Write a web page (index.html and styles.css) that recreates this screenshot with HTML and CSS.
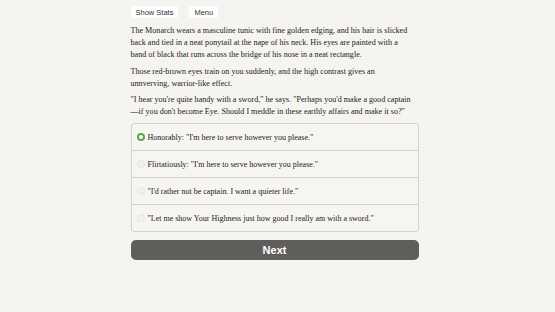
FILE: index.html
```html
<!DOCTYPE html>
<html lang="en">
<head>
  <meta charset="UTF-8" />
  <title>Choice of the Monarch</title>
  <link rel="stylesheet" href="styles.css">
</head>
<body>
  <div class="container">
    <div class="buttons">
      <button class="top-btn">Show Stats</button>
      <button class="top-btn">Menu</button>
    </div>

    <div class="text">
      <p>The Monarch wears a masculine tunic with fine golden edging, and his hair is slicked back and tied in a neat ponytail at the nape of his neck. His eyes are painted with a band of black that runs across the bridge of his nose in a neat rectangle.</p>
      <p>Those red-brown eyes train on you suddenly, and the high contrast gives an unnverving, warrior-like effect.</p>
      <p>"I hear you're quite handy with a sword," he says. "Perhaps you'd make a good captain—if you don't become Eye. Should I meddle in these earthly affairs and make it so?"</p>
    </div>

    <form class="choices">
      <label class="choice"><input type="radio" name="choice" checked> Honorably: "I'm here to serve however you please."</label>
      <label class="choice"><input type="radio" name="choice"> Flirtatiously: "I'm here to serve however you please."</label>
      <label class="choice"><input type="radio" name="choice"> "I'd rather not be captain. I want a quieter life."</label>
      <label class="choice"><input type="radio" name="choice"> "Let me show Your Highness just how good I really am with a sword."</label>
    </form>

    <button class="next">Next</button>
  </div>
</body>
</html>
```
FILE: styles.css
```css
body {
  margin: 0;
  background-color: #f5f4f0;
  font-family: 'Liberation Serif', serif;
  color: #222;
}

.container {
  width: 288px;
  margin: 0 auto;
  padding-top: 6px;
  transform: translateX(-3px);
}

.buttons {
  display: flex;
  gap: 11px;
}

.top-btn {
  background: #fff;
  border: none;
  border-radius: 2px;
  font-family: 'Liberation Sans', sans-serif;
  font-size: 7.5px;
  color: #333;
  padding: 0 5px;
  height: 12px;
}

.text {
  font-size: 8.1px;
  line-height: 12px;
  margin-top: 7px;
  padding-right: 4px;
}

.text p {
  margin: 0 0 4.5px 0;
}

.choices {
  margin-top: 5px;
  border: 1px solid #d3d2ce;
  border-radius: 3px;
  background: #f6f5f2;
}

.choice {
  display: flex;
  align-items: center;
  height: 26px;
  padding-left: 5px;
  font-size: 8px;
  border-top: 1px solid #d3d2ce;
}

.choice:first-child {
  border-top: none;
}

.choice input {
  margin: 0 3px 0 0;
  width: 8px;
  height: 8px;
  appearance: none;
  border-radius: 50%;
  background: #f2f1ee;
  border: 1px solid #e6e5e2;
}

.choice input:checked {
  background: #fff;
  border: 2.5px solid #5aa84a;
}

.next {
  display: block;
  width: 100%;
  margin-top: 8px;
  height: 20px;
  border: none;
  border-radius: 5px;
  background: #5f5e5b;
  color: #fff;
  font-family: 'Liberation Sans', sans-serif;
  font-weight: bold;
  font-size: 11px;
}
```
